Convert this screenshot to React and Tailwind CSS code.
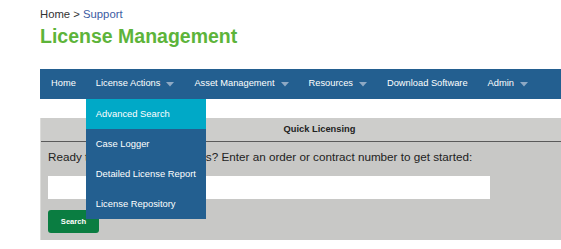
import React from "react";

function Caret() {
  return (
    <svg width="8" height="5" viewBox="0 0 8 5" className="ml-[6px] shrink-0">
      <path d="M0 0 L8 0 L4 4.5 Z" fill="#8ea9c4" />
    </svg>
  );
}

export default function App() {
  const navItems = [
    { label: "Home", caret: false },
    { label: "License Actions", caret: true, dropdown: true },
    { label: "Asset Management", caret: true },
    { label: "Resources", caret: true },
    { label: "Download Software", caret: false },
    { label: "Admin", caret: true },
  ];
  const dropdown = ["Advanced Search", "Case Logger", "Detailed License Report", "License Repository"];

  return (
    <div className="w-[561px] h-[249px] overflow-hidden bg-white font-['Liberation_Sans',Arial,sans-serif]">
      <div className="pl-[40px] w-[660px]">
        <div className="pt-[7px] text-[11.3px] leading-[14px]">
          <span className="text-[#333333]">Home &gt; </span>
          <span className="text-[#3b5ca3]">Support</span>
        </div>
        <h1 className="mt-[2.5px] text-[19.5px] leading-[24px] font-bold text-[#5db43a]">License Management</h1>
        <nav className="mt-[21.5px] h-[30px] bg-[#235f90] flex items-center text-white text-[9.3px] relative z-10">
          {navItems.map((it) => (
            <div
              key={it.label}
              className={`relative h-full flex items-center ${it.label === "Home" ? "pl-[11px] pr-[10px]" : "px-[10px]"}`}
            >
              <span className="whitespace-nowrap">{it.label}</span>
              {it.caret && <Caret />}
              {it.dropdown && (
                <div className="absolute left-0 top-full w-[120px] bg-[#235f90]">
                  {dropdown.map((d, i) => (
                    <div
                      key={d}
                      className={`h-[30px] flex items-center pl-[10px] text-[9.4px] whitespace-nowrap ${i === 0 ? "bg-[#00a9c7]" : ""}`}
                    >
                      {d}
                    </div>
                  ))}
                </div>
              )}
            </div>
          ))}
        </nav>
        <div className="mt-[19px] w-[558px] bg-[#c8c8c6] border-l border-[#dcdcda]">
          <div className="h-[24px] bg-[#cdcdcb] border-b border-[#5a5a5a] flex items-center justify-center text-[9.3px] font-bold text-[#222222]">
            Quick Licensing
          </div>
          <div className="pl-[7px] pt-[7px] pb-[7px]">
            <div className="text-[11.7px] leading-[16px] text-[#222222] whitespace-nowrap">
              Ready to manage your licenses? Enter an order or contract number to get started:
            </div>
            <div className="mt-[11px] w-[442px] h-[23px] bg-white" />
            <button className="mt-[11px] w-[51px] h-[23px] rounded-[3px] bg-[#0a7d41] text-white text-[7.6px] font-bold flex items-center justify-center">
              Search
            </button>
          </div>
        </div>
      </div>
    </div>
  );
}
